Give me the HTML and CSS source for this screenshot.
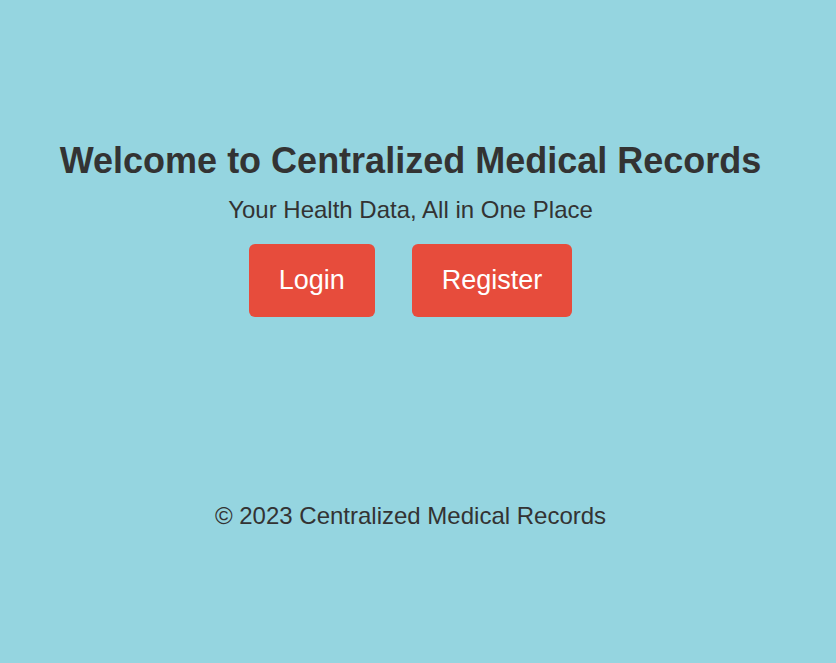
FILE: index.html
```html
<!DOCTYPE html>
<html lang="en">
<head>
<meta charset="utf-8">
<title>Centralized Medical Records</title>
<link rel="stylesheet" href="styles.css">
</head>
<body>
<main class="hero">
  <h1 class="hero-title">Welcome to Centralized Medical Records</h1>
  <p class="hero-subtitle">Your Health Data, All in One Place</p>
  <div class="hero-actions">
    <a class="btn" href="#">Login</a>
    <a class="btn" href="#">Register</a>
  </div>
</main>
<footer class="footer">
  <p>&copy; 2023 Centralized Medical Records</p>
</footer>
</body>
</html>
```
FILE: styles.css
```css
html, body {
  margin: 0;
  padding: 0;
}
body {
  background: #95d5e0;
  color: #333333;
  font-family: "Liberation Sans", Arial, sans-serif;
  min-height: 663px;
  box-sizing: border-box;
  padding-right: 15px;
}
.hero {
  display: flex;
  flex-direction: column;
  align-items: center;
  padding-top: 140px;
}
.hero-title {
  margin: 0;
  font-size: 36px;
  font-weight: bold;
  line-height: 42px;
}
.hero-subtitle {
  margin: 14px 0 0;
  font-size: 24px;
  line-height: 28px;
}
.hero-actions {
  display: flex;
  gap: 37px;
  margin-top: 20px;
}
.btn {
  display: block;
  background: #e74c3c;
  color: #ffffff;
  text-decoration: none;
  font-size: 27px;
  line-height: 31px;
  padding: 21px 30px;
  border-radius: 6px;
}
.footer {
  text-align: center;
  margin-top: 185px;
}
.footer p {
  margin: 0;
  font-size: 24px;
  line-height: 28px;
}
```
